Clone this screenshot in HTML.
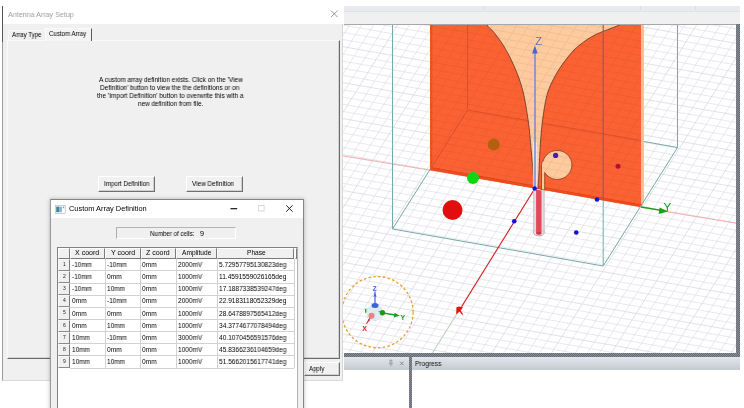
<!DOCTYPE html><html><head><meta charset="utf-8"><title>Antenna Array Setup</title><style>
html,body{margin:0;padding:0;background:#fff;overflow:hidden}
body{width:744px;height:408px;font-family:"Liberation Sans", sans-serif}
#root{position:relative;width:744px;height:408px;overflow:hidden;background:#fff}
.abs{position:absolute}
.t{position:absolute;white-space:pre;line-height:10px;will-change:transform;transform-origin:0 50%;font-family:"Liberation Sans", sans-serif}
.scene{position:absolute;left:343px;top:24px;will-change:transform}
.btn{position:absolute;box-sizing:border-box;background:#f1f1f1;border-top:1px solid #fff;border-left:1px solid #fff;border-right:1px solid #707070;border-bottom:1px solid #707070;box-shadow:inset -1px -1px 0 #d0d0d0}
.rh{position:absolute;box-sizing:border-box;background:#f0f0f0;border-top:1px solid #f8f8f8;border-left:1px solid #fbfbfb;border-right:1px solid #7a7a7a;border-bottom:1px solid #8a8a8a}
.hd{position:absolute;box-sizing:border-box;background:#f0f0f0;border-top:1px solid #fff;border-left:1px solid #fff;border-right:1px solid #7a7a7a;border-bottom:1px solid #7a7a7a}
</style></head><body><div id="root">
<div class="abs" style="left:344px;top:6px;width:396px;height:5px;background:#e8eaf0"></div>
<div class="abs" style="left:344px;top:11px;width:396px;height:13px;background:#f0f0f1;border-top:1px solid #e0e2e7;box-sizing:border-box"></div>
<div class="abs" style="left:483.0px;top:6px;width:1px;height:4px;background:#dadde3"></div>
<div class="abs" style="left:639.5px;top:6px;width:1px;height:4px;background:#dadde3"></div>
<div class="abs" style="left:694.5px;top:6px;width:1px;height:4px;background:#dadde3"></div>
<svg class="scene" width="393" height="329" viewBox="343 24 393 329">
<rect x="343" y="24" width="393" height="329" fill="#fff"/>
<path d="M59.0 -390.9 L1569.4 -127.8 M73.9 -395.5 L-492.6 512.2 M55.0 -384.4 L1565.3 -121.4 M84.7 -393.6 L-481.8 514.1 M50.9 -378.0 L1561.3 -114.9 M95.4 -391.8 L-471.0 516.0 M46.9 -371.5 L1557.2 -108.4 M106.2 -389.9 L-460.2 517.8 M38.8 -358.5 L1549.1 -95.4 M127.8 -386.1 L-438.7 521.6 M34.8 -352.0 L1545.1 -88.9 M138.6 -384.3 L-427.9 523.5 M30.7 -345.5 L1541.0 -82.4 M149.4 -382.4 L-417.1 525.4 M26.7 -339.1 L1537.0 -76.0 M160.2 -380.5 L-406.3 527.2 M18.6 -326.1 L1528.9 -63.0 M181.7 -376.7 L-384.7 531.0 M14.5 -319.6 L1524.8 -56.5 M192.5 -374.9 L-373.9 532.9 M10.5 -313.1 L1520.8 -50.0 M203.3 -373.0 L-363.2 534.7 M6.4 -306.6 L1516.8 -43.5 M214.1 -371.1 L-352.4 536.6 M-1.7 -293.7 L1508.7 -30.6 M235.7 -367.3 L-330.8 540.4 M-5.7 -287.2 L1504.6 -24.1 M246.5 -365.5 L-320.0 542.3 M-9.8 -280.7 L1500.6 -17.6 M257.3 -363.6 L-309.2 544.1 M-13.8 -274.2 L1496.5 -11.1 M268.0 -361.7 L-298.4 546.0 M-21.9 -261.2 L1488.4 1.8 M289.6 -357.9 L-276.8 549.8 M-25.9 -254.8 L1484.4 8.3 M300.4 -356.1 L-266.1 551.7 M-30.0 -248.3 L1480.3 14.8 M311.2 -354.2 L-255.3 553.5 M-34.0 -241.8 L1476.3 21.3 M322.0 -352.3 L-244.5 555.4 M-42.1 -228.8 L1468.2 34.3 M343.6 -348.5 L-222.9 559.2 M-46.2 -222.3 L1464.1 40.7 M354.4 -346.7 L-212.1 561.1 M-50.2 -215.9 L1460.1 47.2 M365.1 -344.8 L-201.3 562.9 M-54.3 -209.4 L1456.1 53.7 M375.9 -342.9 L-190.5 564.8 M-62.4 -196.4 L1448.0 66.7 M397.5 -339.2 L-169.0 568.6 M-66.4 -189.9 L1443.9 73.2 M408.3 -337.3 L-158.2 570.5 M-70.4 -183.4 L1439.9 79.6 M419.1 -335.4 L-147.4 572.3 M-74.5 -177.0 L1435.8 86.1 M429.9 -333.5 L-136.6 574.2 M-82.6 -164.0 L1427.7 99.1 M451.4 -329.8 L-115.0 578.0 M-86.6 -157.5 L1423.7 105.6 M462.2 -327.9 L-104.2 579.8 M-90.7 -151.0 L1419.6 112.1 M473.0 -326.0 L-93.5 581.7 M-94.7 -144.5 L1415.6 118.5 M483.8 -324.1 L-82.7 583.6 M-102.8 -131.6 L1407.5 131.5 M505.4 -320.4 L-61.1 587.4 M-106.9 -125.1 L1403.5 138.0 M516.2 -318.5 L-50.3 589.2 M-110.9 -118.6 L1399.4 144.5 M527.0 -316.6 L-39.5 591.1 M-115.0 -112.1 L1395.4 151.0 M537.7 -314.7 L-28.7 593.0 M-123.0 -99.2 L1387.3 163.9 M559.3 -311.0 L-7.1 596.8 M-127.1 -92.7 L1383.2 170.4 M570.1 -309.1 L3.6 598.6 M-131.1 -86.2 L1379.2 176.9 M580.9 -307.2 L14.4 600.5 M-135.2 -79.7 L1375.1 183.4 M591.7 -305.3 L25.2 602.4 M-143.3 -66.7 L1367.0 196.4 M613.3 -301.6 L46.8 606.2 M-147.3 -60.3 L1363.0 202.8 M624.1 -299.7 L57.6 608.0 M-151.4 -53.8 L1358.9 209.3 M634.8 -297.8 L68.4 609.9 M-155.4 -47.3 L1354.9 215.8 M645.6 -295.9 L79.2 611.8 M-163.5 -34.3 L1346.8 228.8 M667.2 -292.2 L100.7 615.6 M-167.6 -27.8 L1342.8 235.3 M678.0 -290.3 L111.5 617.4 M-171.6 -21.3 L1338.7 241.7 M688.8 -288.4 L122.3 619.3 M-175.7 -14.9 L1334.7 248.2 M699.6 -286.5 L133.1 621.2 M-183.7 -1.9 L1326.6 261.2 M721.1 -282.8 L154.7 624.9 M-187.8 4.6 L1322.5 267.7 M731.9 -280.9 L165.5 626.8 M-191.8 11.1 L1318.5 274.2 M742.7 -279.0 L176.2 628.7 M-195.9 17.6 L1314.4 280.6 M753.5 -277.1 L187.0 630.6 M-204.0 30.5 L1306.3 293.6 M775.1 -273.4 L208.6 634.3 M-208.0 37.0 L1302.3 300.1 M785.9 -271.5 L219.4 636.2 M-212.1 43.5 L1298.3 306.6 M796.7 -269.6 L230.2 638.1 M-216.1 50.0 L1294.2 313.1 M807.4 -267.7 L241.0 640.0 M-224.2 62.9 L1286.1 326.0 M829.0 -264.0 L262.6 643.7 M-228.3 69.4 L1282.1 332.5 M839.8 -262.1 L273.3 645.6 M-232.3 75.9 L1278.0 339.0 M850.6 -260.2 L284.1 647.5 M-236.3 82.4 L1274.0 345.5 M861.4 -258.3 L294.9 649.4 M-244.4 95.4 L1265.9 358.4 M883.0 -254.6 L316.5 653.1 M-248.5 101.8 L1261.8 364.9 M893.8 -252.7 L327.3 655.0 M-252.5 108.3 L1257.8 371.4 M904.5 -250.8 L338.1 656.9 M-256.6 114.8 L1253.7 377.9 M915.3 -248.9 L348.9 658.8 M-264.7 127.8 L1245.7 390.9 M936.9 -245.2 L370.4 662.5 M-268.7 134.3 L1241.6 397.3 M947.7 -243.3 L381.2 664.4 M-272.8 140.7 L1237.6 403.8 M958.5 -241.4 L392.0 666.3 M-276.8 147.2 L1233.5 410.3 M969.3 -239.6 L402.8 668.2 M-284.9 160.2 L1225.4 423.3 M990.8 -235.8 L424.4 671.9 M-288.9 166.7 L1221.4 429.8 M1001.6 -233.9 L435.2 673.8 M-293.0 173.2 L1217.3 436.3 M1012.4 -232.0 L445.9 675.7 M-297.0 179.6 L1213.3 442.7 M1023.2 -230.2 L456.7 677.6 M-305.1 192.6 L1205.2 455.7 M1044.8 -226.4 L478.3 681.3 M-309.2 199.1 L1201.1 462.2 M1055.6 -224.5 L489.1 683.2 M-313.2 205.6 L1197.1 468.7 M1066.4 -222.6 L499.9 685.1 M-317.3 212.1 L1193.0 475.2 M1077.1 -220.8 L510.7 687.0 M-325.4 225.0 L1185.0 488.1 M1098.7 -217.0 L532.3 690.7 M-329.4 231.5 L1180.9 494.6 M1109.5 -215.1 L543.0 692.6 M-333.5 238.0 L1176.9 501.1 M1120.3 -213.2 L553.8 694.5 M-337.5 244.5 L1172.8 507.6 M1131.1 -211.4 L564.6 696.4 M-345.6 257.5 L1164.7 520.5 M1152.7 -207.6 L586.2 700.1 M-349.6 263.9 L1160.7 527.0 M1163.5 -205.7 L597.0 702.0 M-353.7 270.4 L1156.6 533.5 M1174.2 -203.8 L607.8 703.9 M-357.7 276.9 L1152.6 540.0 M1185.0 -202.0 L618.6 705.8 M-365.8 289.9 L1144.5 553.0 M1206.6 -198.2 L640.1 709.5 M-369.9 296.4 L1140.4 559.4 M1217.4 -196.3 L650.9 711.4 M-373.9 302.8 L1136.4 565.9 M1228.2 -194.5 L661.7 713.3 M-378.0 309.3 L1132.4 572.4 M1239.0 -192.6 L672.5 715.2 M-386.1 322.3 L1124.3 585.4 M1260.5 -188.8 L694.1 718.9 M-390.1 328.8 L1120.2 591.9 M1271.3 -186.9 L704.9 720.8 M-394.1 335.3 L1116.2 598.3 M1282.1 -185.1 L715.6 722.7 M-398.2 341.7 L1112.1 604.8 M1292.9 -183.2 L726.4 724.5 M-406.3 354.7 L1104.0 617.8 M1314.5 -179.4 L748.0 728.3 M-410.3 361.2 L1100.0 624.3 M1325.3 -177.5 L758.8 730.2 M-414.4 367.7 L1095.9 630.8 M1336.1 -175.7 L769.6 732.1 M-418.4 374.2 L1091.9 637.2 M1346.8 -173.8 L780.4 733.9 M-426.5 387.1 L1083.8 650.2 M1368.4 -170.0 L802.0 737.7 M-430.6 393.6 L1079.8 656.7 M1379.2 -168.1 L812.7 739.6 M-434.6 400.1 L1075.7 663.2 M1390.0 -166.3 L823.5 741.5 M-438.7 406.6 L1071.7 669.7 M1400.8 -164.4 L834.3 743.3 M-446.8 419.5 L1063.6 682.6 M1422.4 -160.6 L855.9 747.1 M-450.8 426.0 L1059.5 689.1 M1433.2 -158.7 L866.7 749.0 M-454.8 432.5 L1055.5 695.6 M1443.9 -156.9 L877.5 750.9 M-458.9 439.0 L1051.4 702.1 M1454.7 -155.0 L888.3 752.7 M-467.0 452.0 L1043.3 715.1 M1476.3 -151.2 L909.8 756.5 M-471.0 458.4 L1039.3 721.5 M1487.1 -149.4 L920.6 758.4 M-475.1 464.9 L1035.2 728.0 M1497.9 -147.5 L931.4 760.3 M-479.1 471.4 L1031.2 734.5 M1508.7 -145.6 L942.2 762.1 M-487.2 484.4 L1023.1 747.5 M1530.2 -141.8 L963.8 765.9 M-491.3 490.9 L1019.1 754.0 M1541.0 -140.0 L974.6 767.8 M-495.3 497.4 L1015.0 760.4 M1551.8 -138.1 L985.3 769.6 M-499.4 503.8 L1011.0 766.9 M1562.6 -136.2 L996.1 771.5" stroke="#d8d8e6" stroke-width="0.6" fill="none"/>
<path d="M63.1 -397.4 L1573.4 -134.3 M63.1 -397.4 L-503.4 510.3 M42.8 -365.0 L1553.2 -101.9 M117.0 -388.0 L-449.5 519.7 M22.6 -332.6 L1532.9 -69.5 M171.0 -378.6 L-395.5 529.1 M2.4 -300.2 L1512.7 -37.1 M224.9 -369.2 L-341.6 538.5 M-17.8 -267.7 L1492.5 -4.6 M278.8 -359.8 L-287.6 547.9 M-38.1 -235.3 L1472.2 27.8 M332.8 -350.4 L-233.7 557.3 M-58.3 -202.9 L1452.0 60.2 M386.7 -341.0 L-179.8 566.7 M-78.5 -170.5 L1431.8 92.6 M440.7 -331.6 L-125.8 576.1 M-98.8 -138.1 L1411.5 125.0 M494.6 -322.2 L-71.9 585.5 M-119.0 -105.6 L1391.3 157.5 M548.5 -312.8 L-17.9 594.9 M-139.2 -73.2 L1371.1 189.9 M602.5 -303.4 L36.0 604.3 M-159.5 -40.8 L1350.9 222.3 M656.4 -294.1 L89.9 613.7 M-179.7 -8.4 L1330.6 254.7 M710.4 -284.7 L143.9 623.1 M-199.9 24.0 L1310.4 287.1 M764.3 -275.3 L197.8 632.5 M-220.2 56.5 L1290.2 319.5 M818.2 -265.9 L251.8 641.9 M-240.4 88.9 L1269.9 352.0 M872.2 -256.5 L305.7 651.3 M-260.6 121.3 L1249.7 384.4 M926.1 -247.1 L359.6 660.7 M-280.9 153.7 L1229.5 416.8 M980.1 -237.7 L413.6 670.1 M-301.1 186.1 L1209.2 449.2 M1034.0 -228.3 L467.5 679.4 M-321.3 218.5 L1189.0 481.6 M1087.9 -218.9 L521.5 688.8 M-341.5 251.0 L1168.8 514.1 M1141.9 -209.5 L575.4 698.2 M-361.8 283.4 L1148.5 546.5 M1195.8 -200.1 L629.3 707.6 M-382.0 315.8 L1128.3 578.9 M1249.8 -190.7 L683.3 717.0 M-402.2 348.2 L1108.1 611.3 M1303.7 -181.3 L737.2 726.4 M-422.5 380.6 L1087.8 643.7 M1357.6 -171.9 L791.2 735.8 M-442.7 413.1 L1067.6 676.2 M1411.6 -162.5 L845.1 745.2 M-462.9 445.5 L1047.4 708.6 M1465.5 -153.1 L899.0 754.6 M-483.2 477.9 L1027.2 741.0 M1519.5 -143.7 L953.0 764.0 M-503.4 510.3 L1006.9 773.4 M1573.4 -134.3 L1006.9 773.4" stroke="#d0d0e0" stroke-width="0.65" fill="none"/>
<path d="M330 153.8 L430 170.2 L535 188 L668 212 L745 224.6" stroke="#f2a6a6" stroke-width="0.9" fill="none"/>
<path d="M459.5 310 L433.75 351 L420 373" stroke="#a8cfa8" stroke-width="0.8" fill="none"/>
<path d="M392.5 229.0 L467.5 110.0 L677.5 147.5 M467.5 110.0 V0 M677.5 147.5 V0" stroke="#74aaa8" stroke-width="1" fill="none"/>
<path d="M430 0 L430 170 L641 207 L641 0 Z" fill="#fa6233"/>
<path d="M641 0 L641 207 L644 202.4 L644 0 Z" fill="#fbc097"/>
<path d="M430 0 V170 L432.4 166.4 V0 Z" fill="#ee5426"/>
<path d="M430 170 L641 207 L642.3 205 L431.7 167.6 Z" fill="#f04f20"/>
<path d="M431.7 167.6 L642.3 205" stroke="#e23a14" stroke-width="0.7"/>
<path d="M467.5 24 V110 L431.5 167.5 M467.5 110 L641 140.5" stroke="#dc4f27" stroke-width="1" fill="none"/>
<path d="M470.0 2.0 C472.8 5.8 483.4 20.3 487.0 25.0 C490.6 29.7 490.3 28.3 491.8 30.0 C493.3 31.7 494.4 32.9 496.0 35.0 C497.6 37.1 499.8 40.0 501.5 42.5 C503.2 45.0 504.6 47.6 506.0 50.0 C507.4 52.4 508.5 54.5 509.8 57.0 C511.1 59.5 512.5 62.5 513.6 65.0 C514.7 67.5 515.6 69.5 516.6 72.0 C517.6 74.5 518.6 77.0 519.6 80.0 C520.6 83.0 521.6 86.2 522.6 90.0 C523.6 93.8 524.4 97.2 525.4 103.0 C526.4 108.8 527.8 117.2 528.8 125.0 C529.8 132.8 530.4 141.7 531.2 150.0 C532.0 158.3 532.9 168.6 533.4 175.0 C533.9 181.4 534.1 186.1 534.2 188.3 L537.8 188.9 C538.0 186.6 538.4 181.5 538.8 175.0 C539.2 168.5 539.5 158.3 540.0 150.0 C540.5 141.7 541.1 132.8 542.0 125.0 C542.9 117.2 544.1 108.8 545.2 103.0 C546.3 97.2 547.3 93.8 548.6 90.0 C549.9 86.2 551.3 83.3 553.0 80.0 C554.7 76.7 556.5 73.3 558.6 70.0 C560.7 66.7 563.0 63.3 565.6 60.0 C568.2 56.7 570.8 53.2 574.0 50.0 C577.2 46.8 581.0 43.8 585.0 41.0 C589.0 38.2 592.7 36.0 598.0 33.5 C603.3 31.0 605.8 30.6 617.0 26.0 C628.2 21.4 657.0 9.3 665.0 6.0 Z" fill="#fdcb9f" stroke="#4a2a1c" stroke-width="0.7"/>
<path d="M541.5 189.6 V164.5 Q541.6 162.3 543 161.2 A14.7 14.5 0 1 1 544.7 172.6 V190.2 Z" fill="#fdcb9f" stroke="#7a3014" stroke-width="0.7"/>
<clipPath id="cp"><path d="M430 24 L430 170 L641 207 L641 24 Z"/></clipPath>
<g clip-path="url(#cp)" opacity="0.085"><path d="M59.0 -390.9 L1569.4 -127.8 M73.9 -395.5 L-492.6 512.2 M55.0 -384.4 L1565.3 -121.4 M84.7 -393.6 L-481.8 514.1 M50.9 -378.0 L1561.3 -114.9 M95.4 -391.8 L-471.0 516.0 M46.9 -371.5 L1557.2 -108.4 M106.2 -389.9 L-460.2 517.8 M38.8 -358.5 L1549.1 -95.4 M127.8 -386.1 L-438.7 521.6 M34.8 -352.0 L1545.1 -88.9 M138.6 -384.3 L-427.9 523.5 M30.7 -345.5 L1541.0 -82.4 M149.4 -382.4 L-417.1 525.4 M26.7 -339.1 L1537.0 -76.0 M160.2 -380.5 L-406.3 527.2 M18.6 -326.1 L1528.9 -63.0 M181.7 -376.7 L-384.7 531.0 M14.5 -319.6 L1524.8 -56.5 M192.5 -374.9 L-373.9 532.9 M10.5 -313.1 L1520.8 -50.0 M203.3 -373.0 L-363.2 534.7 M6.4 -306.6 L1516.8 -43.5 M214.1 -371.1 L-352.4 536.6 M-1.7 -293.7 L1508.7 -30.6 M235.7 -367.3 L-330.8 540.4 M-5.7 -287.2 L1504.6 -24.1 M246.5 -365.5 L-320.0 542.3 M-9.8 -280.7 L1500.6 -17.6 M257.3 -363.6 L-309.2 544.1 M-13.8 -274.2 L1496.5 -11.1 M268.0 -361.7 L-298.4 546.0 M-21.9 -261.2 L1488.4 1.8 M289.6 -357.9 L-276.8 549.8 M-25.9 -254.8 L1484.4 8.3 M300.4 -356.1 L-266.1 551.7 M-30.0 -248.3 L1480.3 14.8 M311.2 -354.2 L-255.3 553.5 M-34.0 -241.8 L1476.3 21.3 M322.0 -352.3 L-244.5 555.4 M-42.1 -228.8 L1468.2 34.3 M343.6 -348.5 L-222.9 559.2 M-46.2 -222.3 L1464.1 40.7 M354.4 -346.7 L-212.1 561.1 M-50.2 -215.9 L1460.1 47.2 M365.1 -344.8 L-201.3 562.9 M-54.3 -209.4 L1456.1 53.7 M375.9 -342.9 L-190.5 564.8 M-62.4 -196.4 L1448.0 66.7 M397.5 -339.2 L-169.0 568.6 M-66.4 -189.9 L1443.9 73.2 M408.3 -337.3 L-158.2 570.5 M-70.4 -183.4 L1439.9 79.6 M419.1 -335.4 L-147.4 572.3 M-74.5 -177.0 L1435.8 86.1 M429.9 -333.5 L-136.6 574.2 M-82.6 -164.0 L1427.7 99.1 M451.4 -329.8 L-115.0 578.0 M-86.6 -157.5 L1423.7 105.6 M462.2 -327.9 L-104.2 579.8 M-90.7 -151.0 L1419.6 112.1 M473.0 -326.0 L-93.5 581.7 M-94.7 -144.5 L1415.6 118.5 M483.8 -324.1 L-82.7 583.6 M-102.8 -131.6 L1407.5 131.5 M505.4 -320.4 L-61.1 587.4 M-106.9 -125.1 L1403.5 138.0 M516.2 -318.5 L-50.3 589.2 M-110.9 -118.6 L1399.4 144.5 M527.0 -316.6 L-39.5 591.1 M-115.0 -112.1 L1395.4 151.0 M537.7 -314.7 L-28.7 593.0 M-123.0 -99.2 L1387.3 163.9 M559.3 -311.0 L-7.1 596.8 M-127.1 -92.7 L1383.2 170.4 M570.1 -309.1 L3.6 598.6 M-131.1 -86.2 L1379.2 176.9 M580.9 -307.2 L14.4 600.5 M-135.2 -79.7 L1375.1 183.4 M591.7 -305.3 L25.2 602.4 M-143.3 -66.7 L1367.0 196.4 M613.3 -301.6 L46.8 606.2 M-147.3 -60.3 L1363.0 202.8 M624.1 -299.7 L57.6 608.0 M-151.4 -53.8 L1358.9 209.3 M634.8 -297.8 L68.4 609.9 M-155.4 -47.3 L1354.9 215.8 M645.6 -295.9 L79.2 611.8 M-163.5 -34.3 L1346.8 228.8 M667.2 -292.2 L100.7 615.6 M-167.6 -27.8 L1342.8 235.3 M678.0 -290.3 L111.5 617.4 M-171.6 -21.3 L1338.7 241.7 M688.8 -288.4 L122.3 619.3 M-175.7 -14.9 L1334.7 248.2 M699.6 -286.5 L133.1 621.2 M-183.7 -1.9 L1326.6 261.2 M721.1 -282.8 L154.7 624.9 M-187.8 4.6 L1322.5 267.7 M731.9 -280.9 L165.5 626.8 M-191.8 11.1 L1318.5 274.2 M742.7 -279.0 L176.2 628.7 M-195.9 17.6 L1314.4 280.6 M753.5 -277.1 L187.0 630.6 M-204.0 30.5 L1306.3 293.6 M775.1 -273.4 L208.6 634.3 M-208.0 37.0 L1302.3 300.1 M785.9 -271.5 L219.4 636.2 M-212.1 43.5 L1298.3 306.6 M796.7 -269.6 L230.2 638.1 M-216.1 50.0 L1294.2 313.1 M807.4 -267.7 L241.0 640.0 M-224.2 62.9 L1286.1 326.0 M829.0 -264.0 L262.6 643.7 M-228.3 69.4 L1282.1 332.5 M839.8 -262.1 L273.3 645.6 M-232.3 75.9 L1278.0 339.0 M850.6 -260.2 L284.1 647.5 M-236.3 82.4 L1274.0 345.5 M861.4 -258.3 L294.9 649.4 M-244.4 95.4 L1265.9 358.4 M883.0 -254.6 L316.5 653.1 M-248.5 101.8 L1261.8 364.9 M893.8 -252.7 L327.3 655.0 M-252.5 108.3 L1257.8 371.4 M904.5 -250.8 L338.1 656.9 M-256.6 114.8 L1253.7 377.9 M915.3 -248.9 L348.9 658.8 M-264.7 127.8 L1245.7 390.9 M936.9 -245.2 L370.4 662.5 M-268.7 134.3 L1241.6 397.3 M947.7 -243.3 L381.2 664.4 M-272.8 140.7 L1237.6 403.8 M958.5 -241.4 L392.0 666.3 M-276.8 147.2 L1233.5 410.3 M969.3 -239.6 L402.8 668.2 M-284.9 160.2 L1225.4 423.3 M990.8 -235.8 L424.4 671.9 M-288.9 166.7 L1221.4 429.8 M1001.6 -233.9 L435.2 673.8 M-293.0 173.2 L1217.3 436.3 M1012.4 -232.0 L445.9 675.7 M-297.0 179.6 L1213.3 442.7 M1023.2 -230.2 L456.7 677.6 M-305.1 192.6 L1205.2 455.7 M1044.8 -226.4 L478.3 681.3 M-309.2 199.1 L1201.1 462.2 M1055.6 -224.5 L489.1 683.2 M-313.2 205.6 L1197.1 468.7 M1066.4 -222.6 L499.9 685.1 M-317.3 212.1 L1193.0 475.2 M1077.1 -220.8 L510.7 687.0 M-325.4 225.0 L1185.0 488.1 M1098.7 -217.0 L532.3 690.7 M-329.4 231.5 L1180.9 494.6 M1109.5 -215.1 L543.0 692.6 M-333.5 238.0 L1176.9 501.1 M1120.3 -213.2 L553.8 694.5 M-337.5 244.5 L1172.8 507.6 M1131.1 -211.4 L564.6 696.4 M-345.6 257.5 L1164.7 520.5 M1152.7 -207.6 L586.2 700.1 M-349.6 263.9 L1160.7 527.0 M1163.5 -205.7 L597.0 702.0 M-353.7 270.4 L1156.6 533.5 M1174.2 -203.8 L607.8 703.9 M-357.7 276.9 L1152.6 540.0 M1185.0 -202.0 L618.6 705.8 M-365.8 289.9 L1144.5 553.0 M1206.6 -198.2 L640.1 709.5 M-369.9 296.4 L1140.4 559.4 M1217.4 -196.3 L650.9 711.4 M-373.9 302.8 L1136.4 565.9 M1228.2 -194.5 L661.7 713.3 M-378.0 309.3 L1132.4 572.4 M1239.0 -192.6 L672.5 715.2 M-386.1 322.3 L1124.3 585.4 M1260.5 -188.8 L694.1 718.9 M-390.1 328.8 L1120.2 591.9 M1271.3 -186.9 L704.9 720.8 M-394.1 335.3 L1116.2 598.3 M1282.1 -185.1 L715.6 722.7 M-398.2 341.7 L1112.1 604.8 M1292.9 -183.2 L726.4 724.5 M-406.3 354.7 L1104.0 617.8 M1314.5 -179.4 L748.0 728.3 M-410.3 361.2 L1100.0 624.3 M1325.3 -177.5 L758.8 730.2 M-414.4 367.7 L1095.9 630.8 M1336.1 -175.7 L769.6 732.1 M-418.4 374.2 L1091.9 637.2 M1346.8 -173.8 L780.4 733.9 M-426.5 387.1 L1083.8 650.2 M1368.4 -170.0 L802.0 737.7 M-430.6 393.6 L1079.8 656.7 M1379.2 -168.1 L812.7 739.6 M-434.6 400.1 L1075.7 663.2 M1390.0 -166.3 L823.5 741.5 M-438.7 406.6 L1071.7 669.7 M1400.8 -164.4 L834.3 743.3 M-446.8 419.5 L1063.6 682.6 M1422.4 -160.6 L855.9 747.1 M-450.8 426.0 L1059.5 689.1 M1433.2 -158.7 L866.7 749.0 M-454.8 432.5 L1055.5 695.6 M1443.9 -156.9 L877.5 750.9 M-458.9 439.0 L1051.4 702.1 M1454.7 -155.0 L888.3 752.7 M-467.0 452.0 L1043.3 715.1 M1476.3 -151.2 L909.8 756.5 M-471.0 458.4 L1039.3 721.5 M1487.1 -149.4 L920.6 758.4 M-475.1 464.9 L1035.2 728.0 M1497.9 -147.5 L931.4 760.3 M-479.1 471.4 L1031.2 734.5 M1508.7 -145.6 L942.2 762.1 M-487.2 484.4 L1023.1 747.5 M1530.2 -141.8 L963.8 765.9 M-491.3 490.9 L1019.1 754.0 M1541.0 -140.0 L974.6 767.8 M-495.3 497.4 L1015.0 760.4 M1551.8 -138.1 L985.3 769.6 M-499.4 503.8 L1011.0 766.9 M1562.6 -136.2 L996.1 771.5" stroke="#703000" stroke-width="0.8" fill="none"/><path d="M63.1 -397.4 L1573.4 -134.3 M63.1 -397.4 L-503.4 510.3 M42.8 -365.0 L1553.2 -101.9 M117.0 -388.0 L-449.5 519.7 M22.6 -332.6 L1532.9 -69.5 M171.0 -378.6 L-395.5 529.1 M2.4 -300.2 L1512.7 -37.1 M224.9 -369.2 L-341.6 538.5 M-17.8 -267.7 L1492.5 -4.6 M278.8 -359.8 L-287.6 547.9 M-38.1 -235.3 L1472.2 27.8 M332.8 -350.4 L-233.7 557.3 M-58.3 -202.9 L1452.0 60.2 M386.7 -341.0 L-179.8 566.7 M-78.5 -170.5 L1431.8 92.6 M440.7 -331.6 L-125.8 576.1 M-98.8 -138.1 L1411.5 125.0 M494.6 -322.2 L-71.9 585.5 M-119.0 -105.6 L1391.3 157.5 M548.5 -312.8 L-17.9 594.9 M-139.2 -73.2 L1371.1 189.9 M602.5 -303.4 L36.0 604.3 M-159.5 -40.8 L1350.9 222.3 M656.4 -294.1 L89.9 613.7 M-179.7 -8.4 L1330.6 254.7 M710.4 -284.7 L143.9 623.1 M-199.9 24.0 L1310.4 287.1 M764.3 -275.3 L197.8 632.5 M-220.2 56.5 L1290.2 319.5 M818.2 -265.9 L251.8 641.9 M-240.4 88.9 L1269.9 352.0 M872.2 -256.5 L305.7 651.3 M-260.6 121.3 L1249.7 384.4 M926.1 -247.1 L359.6 660.7 M-280.9 153.7 L1229.5 416.8 M980.1 -237.7 L413.6 670.1 M-301.1 186.1 L1209.2 449.2 M1034.0 -228.3 L467.5 679.4 M-321.3 218.5 L1189.0 481.6 M1087.9 -218.9 L521.5 688.8 M-341.5 251.0 L1168.8 514.1 M1141.9 -209.5 L575.4 698.2 M-361.8 283.4 L1148.5 546.5 M1195.8 -200.1 L629.3 707.6 M-382.0 315.8 L1128.3 578.9 M1249.8 -190.7 L683.3 717.0 M-402.2 348.2 L1108.1 611.3 M1303.7 -181.3 L737.2 726.4 M-422.5 380.6 L1087.8 643.7 M1357.6 -171.9 L791.2 735.8 M-442.7 413.1 L1067.6 676.2 M1411.6 -162.5 L845.1 745.2 M-462.9 445.5 L1047.4 708.6 M1465.5 -153.1 L899.0 754.6 M-483.2 477.9 L1027.2 741.0 M1519.5 -143.7 L953.0 764.0 M-503.4 510.3 L1006.9 773.4 M1573.4 -134.3 L1006.9 773.4" stroke="#703000" stroke-width="1" fill="none"/></g>
<path d="M603.2 24 V200.4" stroke="#8f6248" stroke-width="1.2"/>
<path d="M603.2 200.4 V266" stroke="#74aaa8" stroke-width="1"/>
<path d="M392.5 0 V229.0 L603.2 266.0 L677.5 147.5" stroke="#74aaa8" stroke-width="1" fill="none"/>
<rect x="532.9" y="142" width="4.3" height="46.5" fill="#efe6ee" opacity="0.8"/>
<path d="M535 188 V52" stroke="#6a84cf" stroke-width="1.4"/>
<path d="M534.9 45.6 L537.7 53.6 H532.1 Z" fill="#3f66d6"/>
<path d="M534.7 188.8 L461.6 306.8" stroke="#d91a1a" stroke-width="1.1"/>
<path d="M456.2 314.4 L456.4 307.3 L459 306.6 L463 307.2 L460.8 310.4 L463.3 314.4 L462 314.8 L459.6 311.6 Z" fill="#e81414"/>
<path d="M641 207 L660 210.2" stroke="#18a018" stroke-width="1.3"/>
<path d="M668.2 211.6 L658.6 214 L659.6 207.4 Z" fill="#18a018"/>
<ellipse cx="538.9" cy="232.5" rx="5.4" ry="3.4" fill="#f3e4e8" stroke="#8c8c8c" stroke-width="0.7"/>
<path d="M533.4 189 L544.4 191 V232.5 H533.4 Z" fill="#dfd0da" opacity="0.8"/>
<path d="M533.6 189.3 V232.5 M544.2 191 V232.5" stroke="#bdb0ba" stroke-width="0.6"/>
<path d="M536.1 189.6 L541.5 190.6 V233.4 H536.1 Z" fill="#e24857"/>
<ellipse cx="538.8" cy="233.2" rx="2.7" ry="1.5" fill="#d83040"/>
<circle cx="493.75" cy="144.50" r="6.00" fill="#b4600e"/>
<circle cx="555.60" cy="155.40" r="2.60" fill="#4a1ea0"/>
<circle cx="618.00" cy="166.25" r="2.50" fill="#b01434"/>
<circle cx="473.00" cy="178.00" r="6.00" fill="#10d414"/>
<circle cx="534.70" cy="188.50" r="2.20" fill="#1414c8"/>
<circle cx="597.00" cy="199.50" r="2.30" fill="#1414c8"/>
<circle cx="452.50" cy="210.00" r="10.00" fill="#e20e0e"/>
<circle cx="514.25" cy="221.25" r="2.30" fill="#1414c8"/>
<circle cx="576.25" cy="232.50" r="2.30" fill="#1414c8"/>
<text x="535.2" y="44.8" font-family='&quot;Liberation Sans&quot;, sans-serif' font-size="11" fill="#6673b8">Z</text>
<text x="663.5" y="211.4" font-family='&quot;Liberation Sans&quot;, sans-serif' font-size="11.6" fill="#18a018">Y</text>
<circle cx="377.5" cy="312.2" r="35.6" fill="none" stroke="#e8a030" stroke-width="1.3" stroke-dasharray="2.6 2.2"/>
<path d="M367 308.2 l6.8 -3.6 l8 3 v9.6 l-6.8 4 l-8 -3.4 z" fill="#e3ecf3" stroke="#cfdbe6" stroke-width="0.5"/>
<path d="M367 308.2 l8 3.4 l6.8 -4 M375 311.6 v9.6" stroke="#cddae6" stroke-width="0.5" fill="none"/>
<path d="M375 304.5 V291.5" stroke="#3c64d4" stroke-width="1.2"/>
<path d="M375 293 l1.6 3.6 h-3.2 z" fill="#3c64d4"/>
<ellipse cx="375" cy="305.4" rx="3.5" ry="2.5" fill="#3c64d4"/>
<path d="M378.6 311.2 L381 312.2" stroke="#8c8c8c" stroke-width="1.2"/>
<path d="M382.2 312.8 L395 315" stroke="#18a018" stroke-width="1.3"/>
<path d="M399.6 315.8 L393.8 317.4 L394.6 312.8 Z" fill="#18a018"/>
<circle cx="382.4" cy="312.8" r="2.7" fill="#12a012"/>
<path d="M371.5 315.7 L366.5 323.8" stroke="#e03030" stroke-width="1.2"/>
<path d="M367.6 322 l0.6 -3 l2 1.4 z" fill="#e03030"/>
<circle cx="371.5" cy="315.7" r="3" fill="#ef8080"/>
<path d="M365.7 308.8 V312.8" stroke="#18a018" stroke-width="1.3"/>
<text x="372.8" y="290.6" font-family='&quot;Liberation Sans&quot;, sans-serif' font-size="6.4" font-weight="bold" fill="#3c64d4">Z</text>
<text x="400.4" y="320.4" font-family='&quot;Liberation Sans&quot;, sans-serif' font-size="7" font-weight="bold" fill="#18a018">Y</text>
<text x="362.3" y="330.8" font-family='&quot;Liberation Sans&quot;, sans-serif' font-size="7" font-weight="bold" fill="#e02020">X</text>
<path d="M344 24.5 H736" stroke="#a6a8ac" stroke-width="1"/>
</svg>
<div class="abs" style="left:736px;top:24px;width:4px;height:333px;background:#7a7e87 repeating-conic-gradient(#666a73 0 25%,#8a8e96 0 50%) 0 0/2px 2px"></div>
<div class="abs" style="left:344px;top:353px;width:396px;height:4px;background:#7a7e87 repeating-conic-gradient(#666a73 0 25%,#8a8e96 0 50%) 0 0/2px 2px"></div>
<div class="abs" style="left:344px;top:357px;width:396px;height:13px;background:linear-gradient(#e3e6ec,#c4c9d2)"></div>
<div class="abs" style="left:408.6px;top:353px;width:3.8px;height:60px;background:#7a7e87 repeating-conic-gradient(#666a73 0 25%,#8a8e96 0 50%) 0 0/2px 2px"></div>
<svg class="abs" style="left:386px;top:358px" width="22" height="11" viewBox="386 358 22 11"><path d="M389.6 360.2 h2.6 M390 360.2 v3.4 M391.8 360.2 v3.4 M389 363.7 h3.8 M390.9 363.7 v2.6" stroke="#7a7f8a" stroke-width="0.6" fill="none"/><path d="M400 361.6 l3.6 3.6 M403.6 361.6 l-3.6 3.6" stroke="#6a6f7a" stroke-width="0.7"/></svg>
<span id="t72" class="t" style="left:415.00px;top:359px;font-size:7.20px;color:#0c0c0c;transform:scaleX(0.9143);">Progress</span>
<div class="abs" id="dlg" style="left:2px;top:5.5px;width:341.2px;height:375px;background:#f0f0f0;box-sizing:border-box;border-left:1px solid #9c9c9c;border-right:1px solid #d8d8d8;border-bottom:1px solid #dadada"></div>
<div class="abs" style="left:2px;top:5.5px;width:1px;height:36px;background:#565656"></div>
<div class="abs" style="left:3px;top:0;width:340px;height:23.6px;background:#fff"></div>
<svg class="abs" style="left:328px;top:8px" width="12" height="12" viewBox="328 8 12 12"><path d="M331 10.5 L337.6 17.1 M337.6 10.5 L331 17.1" stroke="#6a6a6a" stroke-width="0.7"/></svg>
<div class="abs" style="left:7px;top:40px;width:333px;height:319px;box-sizing:border-box;border-left:1px solid #fafafa;border-top:1px solid #fafafa;border-right:1px solid #6a6a6a;border-bottom:1px solid #6a6a6a;box-shadow:inset -1px -1px 0 #d4d4d4"></div>
<div class="abs" style="left:45px;top:27.6px;width:47px;height:13.6px;box-sizing:border-box;background:#f4f4f4;border-left:1px solid #fbfbfb;border-top:1px solid #fbfbfb;border-right:1px solid #5a5a5a"></div>
<div class="abs" style="left:8px;top:29.5px;width:37px;height:10.5px;box-sizing:border-box;border-left:1px solid #f9f9f9;border-top:1px solid #f9f9f9"></div>
<div class="btn" style="left:98px;top:175.5px;width:57.4px;height:16.8px"></div>
<div class="btn" style="left:185.6px;top:175.5px;width:57px;height:16.8px"></div>
<div class="btn" style="left:303.5px;top:362px;width:36.8px;height:13.8px"></div>
<span id="t0" class="t" style="left:7.80px;top:10px;font-size:7.60px;color:#9b9b9b;transform:scaleX(0.9373);">Antenna Array Setup</span>
<span id="t1" class="t" style="left:11.50px;top:30px;font-size:6.60px;color:#000;transform:scaleX(0.9287);">Array Type</span>
<span id="t2" class="t" style="left:49.20px;top:29px;font-size:6.60px;color:#000;transform:scaleX(0.9286);">Custom Array</span>
<span id="t3" class="t" style="left:98.60px;top:75px;font-size:6.60px;color:#000;transform:scaleX(0.9825);">A custom array definition exists. Click on the 'View</span>
<span id="t4" class="t" style="left:100.30px;top:83px;font-size:6.60px;color:#000;transform:scaleX(0.9827);">Definition' button to view the the definitions or on</span>
<span id="t5" class="t" style="left:96.50px;top:91px;font-size:6.60px;color:#000;transform:scaleX(0.9849);">the 'Import Definition' button to overwrite this with a</span>
<span id="t6" class="t" style="left:137.70px;top:99px;font-size:6.60px;color:#000;transform:scaleX(0.9683);">new definition from file.</span>
<span id="t7" class="t" style="left:103.75px;top:179px;font-size:6.60px;color:#000;transform:scaleX(0.9476);">Import Definition</span>
<span id="t8" class="t" style="left:192.25px;top:179px;font-size:6.60px;color:#000;transform:scaleX(0.9655);">View Definition</span>
<span id="t9" class="t" style="left:309.00px;top:364px;font-size:6.60px;color:#000;transform:scaleX(0.9242);">Apply</span>
<div class="abs" id="sub" style="left:50px;top:199px;width:254.4px;height:215px;background:#f0f0f0;box-sizing:border-box;border:1px solid #858585;border-left-color:#9a9a9a;box-shadow:0 0 4px rgba(0,0,0,.28)"></div>
<div class="abs" style="left:51px;top:200px;width:252.4px;height:17.6px;background:#fff"></div>
<svg class="abs" style="left:55px;top:204.5px" width="11" height="9" viewBox="0 0 11 9"><rect x="0.4" y="0.4" width="9.8" height="8" fill="#fff" stroke="#a8b4c4" stroke-width="0.6"/><rect x="1.2" y="1.6" width="2.8" height="5.6" fill="#3c8c8c"/><rect x="4" y="1.6" width="3" height="5.6" fill="#8cb4dc"/><rect x="7.8" y="1.6" width="1.4" height="1.6" fill="#6e96c8"/></svg>
<svg class="abs" style="left:226px;top:202px" width="74" height="14" viewBox="226 202 74 14"><path d="M230.5 208.7 H237.2" stroke="#111" stroke-width="1.2"/><rect x="258.7" y="205.6" width="5.4" height="5.4" fill="none" stroke="#c9c9c9" stroke-width="0.7"/><path d="M286.2 205.3 L292.6 211.7 M292.6 205.3 L286.2 211.7" stroke="#111" stroke-width="0.95"/></svg>
<div class="abs" style="left:116px;top:227px;width:120.4px;height:12.4px;box-sizing:border-box;border-left:1px solid #adadad;border-top:1px solid #b4b4b4;border-right:1px solid #fff;border-bottom:1px solid #fff"></div>
<div class="abs" style="left:57px;top:247px;width:241px;height:170px;background:#fff;border-left:1px solid #828282;border-top:1px solid #828282;border-right:1.6px solid #b2b2b2;box-sizing:border-box"></div>
<div class="hd" style="left:58.0px;top:248px;width:12.0px;height:11px"></div>
<div class="hd" style="left:70.0px;top:248px;width:35.0px;height:11px"></div>
<div class="hd" style="left:105.0px;top:248px;width:35.5px;height:11px"></div>
<div class="hd" style="left:140.5px;top:248px;width:35.5px;height:11px"></div>
<div class="hd" style="left:176.0px;top:248px;width:41.0px;height:11px"></div>
<div class="hd" style="left:217.0px;top:248px;width:77.0px;height:11px"></div>
<div class="hd" style="left:294.5px;top:248px;width:1.4px;height:11px"></div>
<div class="rh" style="left:58px;top:258.8px;width:12px;height:12.2px"></div>
<div class="abs" style="left:70px;top:270.3px;width:224px;height:1px;background:#d2d2d2"></div>
<div class="rh" style="left:58px;top:270.9px;width:12px;height:12.2px"></div>
<div class="abs" style="left:70px;top:282.5px;width:224px;height:1px;background:#d2d2d2"></div>
<div class="rh" style="left:58px;top:283.1px;width:12px;height:12.2px"></div>
<div class="abs" style="left:70px;top:294.6px;width:224px;height:1px;background:#d2d2d2"></div>
<div class="rh" style="left:58px;top:295.2px;width:12px;height:12.2px"></div>
<div class="abs" style="left:70px;top:306.8px;width:224px;height:1px;background:#d2d2d2"></div>
<div class="rh" style="left:58px;top:307.4px;width:12px;height:12.2px"></div>
<div class="abs" style="left:70px;top:318.9px;width:224px;height:1px;background:#d2d2d2"></div>
<div class="rh" style="left:58px;top:319.6px;width:12px;height:12.2px"></div>
<div class="abs" style="left:70px;top:331.1px;width:224px;height:1px;background:#d2d2d2"></div>
<div class="rh" style="left:58px;top:331.7px;width:12px;height:12.2px"></div>
<div class="abs" style="left:70px;top:343.2px;width:224px;height:1px;background:#d2d2d2"></div>
<div class="rh" style="left:58px;top:343.9px;width:12px;height:12.2px"></div>
<div class="abs" style="left:70px;top:355.4px;width:224px;height:1px;background:#d2d2d2"></div>
<div class="rh" style="left:58px;top:356.0px;width:12px;height:12.2px"></div>
<div class="abs" style="left:70px;top:367.5px;width:224px;height:1px;background:#d2d2d2"></div>
<div class="abs" style="left:104.5px;top:259px;width:1px;height:109.4px;background:#d2d2d2"></div>
<div class="abs" style="left:140.0px;top:259px;width:1px;height:109.4px;background:#d2d2d2"></div>
<div class="abs" style="left:175.5px;top:259px;width:1px;height:109.4px;background:#d2d2d2"></div>
<div class="abs" style="left:216.5px;top:259px;width:1px;height:109.4px;background:#d2d2d2"></div>
<div class="abs" style="left:293.5px;top:259px;width:1px;height:109.4px;background:#d2d2d2"></div>
<span id="t10" class="t" style="left:68.75px;top:204px;font-size:7.40px;color:#000;transform:scaleX(0.9982);">Custom Array Definition</span>
<span id="t11" class="t" style="left:150.00px;top:229px;font-size:6.60px;color:#000;transform:scaleX(0.9341);">Number of cells:</span>
<span id="t12" class="t" style="left:199.50px;top:229px;font-size:6.60px;color:#000;transform:scaleX(1.0894);">9</span>
<span id="t13" class="t" style="left:75.00px;top:248px;font-size:6.60px;color:#000;transform:scaleX(1.0667);">X coord</span>
<span id="t14" class="t" style="left:110.75px;top:248px;font-size:6.60px;color:#000;transform:scaleX(1.0726);">Y coord</span>
<span id="t15" class="t" style="left:146.25px;top:248px;font-size:6.60px;color:#000;transform:scaleX(1.0622);">Z coord</span>
<span id="t16" class="t" style="left:182.00px;top:248px;font-size:6.60px;color:#000;transform:scaleX(0.9973);">Amplitude</span>
<span id="t17" class="t" style="left:246.75px;top:248px;font-size:6.60px;color:#000;transform:scaleX(0.9891);">Phase</span>
<span id="t18" class="t" style="left:71.75px;top:260px;font-size:6.60px;color:#000;transform:scaleX(0.9671);">-10mm</span>
<span id="t19" class="t" style="left:107.00px;top:260px;font-size:6.60px;color:#000;transform:scaleX(0.9671);">-10mm</span>
<span id="t20" class="t" style="left:142.00px;top:260px;font-size:6.60px;color:#000;transform:scaleX(0.9702);">0mm</span>
<span id="t21" class="t" style="left:177.50px;top:260px;font-size:6.60px;color:#000;transform:scaleX(0.9804);">2000mV</span>
<span id="t22" class="t" style="left:218.50px;top:260px;font-size:6.60px;color:#000;transform:scaleX(0.9920);">5.72957795130823deg</span>
<span id="t23" class="t" style="left:63.00px;top:259px;font-size:5.00px;color:#222;transform:scaleX(0.9348);">1</span>
<span id="t24" class="t" style="left:71.75px;top:272px;font-size:6.60px;color:#000;transform:scaleX(0.9671);">-10mm</span>
<span id="t25" class="t" style="left:107.00px;top:272px;font-size:6.60px;color:#000;transform:scaleX(0.9702);">0mm</span>
<span id="t26" class="t" style="left:142.00px;top:272px;font-size:6.60px;color:#000;transform:scaleX(0.9702);">0mm</span>
<span id="t27" class="t" style="left:177.50px;top:272px;font-size:6.60px;color:#000;transform:scaleX(0.9804);">1000mV</span>
<span id="t28" class="t" style="left:218.50px;top:272px;font-size:6.60px;color:#000;transform:scaleX(0.9991);">11.4591559026165deg</span>
<span id="t29" class="t" style="left:63.00px;top:271px;font-size:5.00px;color:#222;transform:scaleX(0.9348);">2</span>
<span id="t30" class="t" style="left:71.75px;top:284px;font-size:6.60px;color:#000;transform:scaleX(0.9671);">-10mm</span>
<span id="t31" class="t" style="left:107.00px;top:284px;font-size:6.60px;color:#000;transform:scaleX(0.9734);">10mm</span>
<span id="t32" class="t" style="left:142.00px;top:284px;font-size:6.60px;color:#000;transform:scaleX(0.9702);">0mm</span>
<span id="t33" class="t" style="left:177.50px;top:284px;font-size:6.60px;color:#000;transform:scaleX(0.9804);">1000mV</span>
<span id="t34" class="t" style="left:218.50px;top:284px;font-size:6.60px;color:#000;transform:scaleX(0.9920);">17.1887338539247deg</span>
<span id="t35" class="t" style="left:63.00px;top:283px;font-size:5.00px;color:#222;transform:scaleX(0.9348);">3</span>
<span id="t36" class="t" style="left:71.75px;top:296px;font-size:6.60px;color:#000;transform:scaleX(0.9702);">0mm</span>
<span id="t37" class="t" style="left:107.00px;top:296px;font-size:6.60px;color:#000;transform:scaleX(0.9671);">-10mm</span>
<span id="t38" class="t" style="left:142.00px;top:296px;font-size:6.60px;color:#000;transform:scaleX(0.9702);">0mm</span>
<span id="t39" class="t" style="left:177.50px;top:296px;font-size:6.60px;color:#000;transform:scaleX(0.9804);">2000mV</span>
<span id="t40" class="t" style="left:218.50px;top:296px;font-size:6.60px;color:#000;transform:scaleX(0.9991);">22.9183118052329deg</span>
<span id="t41" class="t" style="left:63.00px;top:295px;font-size:5.00px;color:#222;transform:scaleX(0.9348);">4</span>
<span id="t42" class="t" style="left:71.75px;top:309px;font-size:6.60px;color:#000;transform:scaleX(0.9702);">0mm</span>
<span id="t43" class="t" style="left:107.00px;top:309px;font-size:6.60px;color:#000;transform:scaleX(0.9702);">0mm</span>
<span id="t44" class="t" style="left:142.00px;top:309px;font-size:6.60px;color:#000;transform:scaleX(0.9702);">0mm</span>
<span id="t45" class="t" style="left:177.50px;top:309px;font-size:6.60px;color:#000;transform:scaleX(0.9804);">1000mV</span>
<span id="t46" class="t" style="left:218.50px;top:309px;font-size:6.60px;color:#000;transform:scaleX(0.9920);">28.6478897565412deg</span>
<span id="t47" class="t" style="left:63.00px;top:307px;font-size:5.00px;color:#222;transform:scaleX(0.9348);">5</span>
<span id="t48" class="t" style="left:71.75px;top:321px;font-size:6.60px;color:#000;transform:scaleX(0.9702);">0mm</span>
<span id="t49" class="t" style="left:107.00px;top:321px;font-size:6.60px;color:#000;transform:scaleX(0.9734);">10mm</span>
<span id="t50" class="t" style="left:142.00px;top:321px;font-size:6.60px;color:#000;transform:scaleX(0.9702);">0mm</span>
<span id="t51" class="t" style="left:177.50px;top:321px;font-size:6.60px;color:#000;transform:scaleX(0.9804);">1000mV</span>
<span id="t52" class="t" style="left:218.50px;top:321px;font-size:6.60px;color:#000;transform:scaleX(0.9920);">34.3774677078494deg</span>
<span id="t53" class="t" style="left:63.00px;top:320px;font-size:5.00px;color:#222;transform:scaleX(0.9348);">6</span>
<span id="t54" class="t" style="left:71.75px;top:333px;font-size:6.60px;color:#000;transform:scaleX(0.9734);">10mm</span>
<span id="t55" class="t" style="left:107.00px;top:333px;font-size:6.60px;color:#000;transform:scaleX(0.9671);">-10mm</span>
<span id="t56" class="t" style="left:142.00px;top:333px;font-size:6.60px;color:#000;transform:scaleX(0.9702);">0mm</span>
<span id="t57" class="t" style="left:177.50px;top:333px;font-size:6.60px;color:#000;transform:scaleX(0.9804);">3000mV</span>
<span id="t58" class="t" style="left:218.50px;top:333px;font-size:6.60px;color:#000;transform:scaleX(0.9920);">40.1070456591576deg</span>
<span id="t59" class="t" style="left:63.00px;top:332px;font-size:5.00px;color:#222;transform:scaleX(0.9348);">7</span>
<span id="t60" class="t" style="left:71.75px;top:345px;font-size:6.60px;color:#000;transform:scaleX(0.9734);">10mm</span>
<span id="t61" class="t" style="left:107.00px;top:345px;font-size:6.60px;color:#000;transform:scaleX(0.9702);">0mm</span>
<span id="t62" class="t" style="left:142.00px;top:345px;font-size:6.60px;color:#000;transform:scaleX(0.9702);">0mm</span>
<span id="t63" class="t" style="left:177.50px;top:345px;font-size:6.60px;color:#000;transform:scaleX(0.9804);">1000mV</span>
<span id="t64" class="t" style="left:218.50px;top:345px;font-size:6.60px;color:#000;transform:scaleX(0.9920);">45.8366236104659deg</span>
<span id="t65" class="t" style="left:63.00px;top:344px;font-size:5.00px;color:#222;transform:scaleX(0.9348);">8</span>
<span id="t66" class="t" style="left:71.75px;top:357px;font-size:6.60px;color:#000;transform:scaleX(0.9734);">10mm</span>
<span id="t67" class="t" style="left:107.00px;top:357px;font-size:6.60px;color:#000;transform:scaleX(0.9734);">10mm</span>
<span id="t68" class="t" style="left:142.00px;top:357px;font-size:6.60px;color:#000;transform:scaleX(0.9702);">0mm</span>
<span id="t69" class="t" style="left:177.50px;top:357px;font-size:6.60px;color:#000;transform:scaleX(0.9804);">1000mV</span>
<span id="t70" class="t" style="left:218.50px;top:357px;font-size:6.60px;color:#000;transform:scaleX(0.9920);">51.5662015617741deg</span>
<span id="t71" class="t" style="left:63.00px;top:356px;font-size:5.00px;color:#222;transform:scaleX(0.9348);">9</span>
</div></body></html>
